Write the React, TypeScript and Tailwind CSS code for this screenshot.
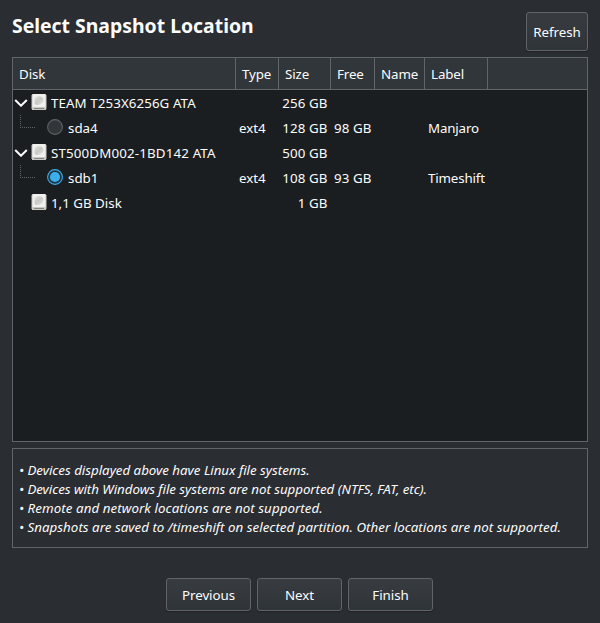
type Row = {
  name: string;
  tracking?: string;
  kind: "disk" | "part";
  open?: boolean;
  selected?: boolean;
  type?: string;
  size: string;
  free?: string;
  label?: string;
};

const rows: Row[] = [
  { name: "TEAM T253X6256G ATA", tracking: "tracking-[0.08px]", kind: "disk", open: true, size: "256 GB" },
  { name: "sda4", kind: "part", type: "ext4", size: "128 GB", free: "98 GB", label: "Manjaro" },
  { name: "ST500DM002-1BD142 ATA", tracking: "tracking-[0.15px]", kind: "disk", open: true, size: "500 GB" },
  { name: "sdb1", kind: "part", selected: true, type: "ext4", size: "108 GB", free: "93 GB", label: "Timeshift" },
  { name: "1,1 GB Disk", kind: "disk", size: "1 GB" },
];

const headers = ["Disk", "Type", "Size", "Free", "Name", "Label"];

const notes = [
  { text: "Devices displayed above have Linux file systems.", tracking: "tracking-[-0.02px]" },
  { text: "Devices with Windows file systems are not supported (NTFS, FAT, etc).", tracking: "tracking-[-0.045px]" },
  { text: "Remote and network locations are not supported.", tracking: "tracking-[0.06px]" },
  {
    text: "Snapshots are saved to /timeshift on selected partition. Other locations are not supported.",
    tracking: "tracking-[0.02px]",
  },
];

const columns = "grid grid-cols-[223px_43px_52px_44px_50px_63px_1fr]";

function Chevron() {
  return (
    <svg className="block" width="14" height="8" viewBox="0 0 14 8" fill="none">
      <path d="M1.200 1 7 6.700l5.800-5.700" stroke="#fcfcfc" strokeWidth="2" />
    </svg>
  );
}

function DiskIcon() {
  return (
    <svg className="block" width="16" height="16" viewBox="0 0 16 16">
      <defs>
        <linearGradient id="platter" x1="0" y1="0" x2="1" y2="1">
          <stop offset="0" stopColor="#dededb" />
          <stop offset="0.5" stopColor="#c9c9c5" />
          <stop offset="1" stopColor="#e8e8e6" />
        </linearGradient>
      </defs>
      <rect x="1" y="0" width="14" height="16" rx="1" fill="#f0f0ee" />
      <path d="M1 1v14M15 1v14" stroke="#c6c6c3" strokeWidth="1" />
      <rect x="1" y="13" width="14" height="3" rx="0.8" fill="#c8c8c4" />
      <rect x="3" y="14" width="10" height="1" fill="#858582" />
      <path d="M3.500 9V6c0-2.300 2-3.800 4.500-3.800s4.500 1.300 4.500 3.600S11 10 8 10.800c-2.700.7-4.500.2-4.500-1.800z" fill="url(#platter)" />
    </svg>
  );
}

function Radio({ on }: { on?: boolean }) {
  return (
    <svg className="block" width="16" height="16" viewBox="0 0 16 16">
      <circle cx="8" cy="8" r="7.4" fill={on ? "#1d3442" : "#31363b"} stroke={on ? "#3daee9" : "#5f6265"} strokeWidth="1.1" />
      {on && <circle cx="8" cy="8" r="5.1" fill="#3daee9" />}
    </svg>
  );
}

function Branch() {
  return (
    <svg className="block" width="15" height="13" viewBox="0 0 15 13" shapeRendering="crispEdges">
      <path d="M.5 0v13M2 12.500h13" stroke="#616568" strokeDasharray="1 1" fill="none" />
    </svg>
  );
}

function NameCell({ row }: { row: Row }) {
  if (row.kind === "part") {
    return (
      <div className="flex h-[25px] pl-[7px]">
        <Branch />
        <div className="mt-1 ml-3"><Radio on={row.selected} /></div>
        <span className="ml-[5px] leading-[26px]">{row.name}</span>
      </div>
    );
  }
  return (
    <div className="flex h-[25px]">
      <div className="w-[18px] pt-[9px] pl-px">{row.open && <Chevron />}</div>
      <div className="pt-1"><DiskIcon /></div>
      <span className={`ml-1 leading-[26px] ${row.tracking ?? ""}`}>{row.name}</span>
    </div>
  );
}

function Button({ text, size }: { text: string; size: string }) {
  return (
    <button className={`${size} flex items-center justify-center rounded-[3px] border border-[#616569] bg-linear-to-b from-[#383c40] to-[#2f3438] pt-0.5 tracking-[-0.06px] shadow-[0_1px_1px_rgba(0,0,0,0.25)]`}>
      {text}
    </button>
  );
}

export default function App() {
  return (
    <main className="flex h-[623px] w-[600px] flex-col bg-[#2a2d32] px-3 pt-3 font-['Noto_Sans',sans-serif] text-[13.33px] whitespace-nowrap text-[#fcfcfc]">
      <header className="flex h-[45px] items-start justify-between">
        <h1 className="text-[19.4px] leading-7 font-bold">Select Snapshot Location</h1>
        <Button text="Refresh" size="h-[39px] w-[62px]" />
      </header>

      <section className="h-[385px] border border-[#616569] bg-[#1b1e20]">
        <div className={`${columns} h-8 border-b border-[#616569] bg-[#31363b] leading-8 tracking-[-0.1px]`}>
          {headers.map((h) => (
            <div key={h} className="border-r border-[#616569] pl-1.5">{h}</div>
          ))}
        </div>
        {rows.map((row) => (
          <div key={row.name} className={`${columns} h-[25px] leading-[26px]`}>
            <NameCell row={row} />
            <span className="pl-[3px]">{row.type}</span>
            <span className="pr-[3.5px] text-right tracking-[0.1px]">{row.size}</span>
            <span className="pr-[3.5px] text-right tracking-[0.1px]">{row.free}</span>
            <span />
            <span className="pl-[3px] tracking-[-0.16px]">{row.label}</span>
          </div>
        ))}
      </section>

      <section className="mt-1.5 h-[100px] border border-[#616569] pt-3 pl-1.5 leading-[19px] italic">
        {notes.map((n) => (
          <p key={n.text} className={n.tracking}>• {n.text}</p>
        ))}
      </section>

      <footer className="mt-[30px] flex justify-center gap-1.5 pr-px">
        <Button text="Previous" size="h-[33px] w-[85px]" />
        <Button text="Next" size="h-[33px] w-[85px]" />
        <Button text="Finish" size="h-[33px] w-[85px]" />
      </footer>
    </main>
  );
}
